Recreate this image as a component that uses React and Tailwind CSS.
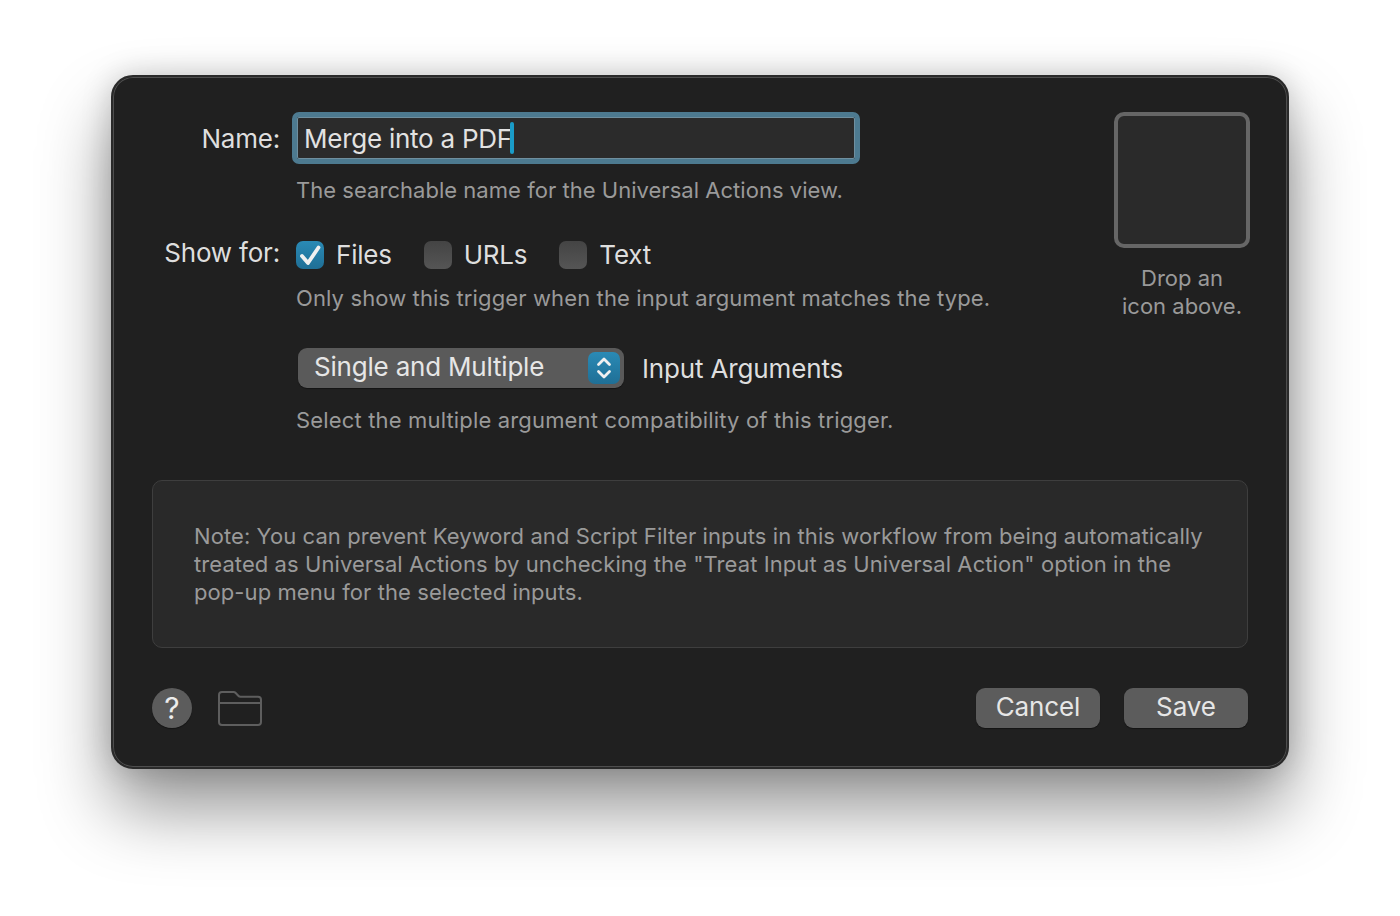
const sans = "font-['Inter','Liberation_Sans',sans-serif]";

function Checkbox({ checked, label }) {
  return (
    <label className="flex items-center gap-[12px]">
      {checked ? (
        <span className="flex h-[28px] w-[28px] items-center justify-center rounded-[7px] bg-gradient-to-b from-[#2a8ab5] to-[#1f6f96]">
          <svg width="28" height="28" viewBox="0 0 28 28" fill="none">
            <path d="M6 15l6 7L22.500 6.500" stroke="#f0f0f0" strokeWidth="3.800" strokeLinecap="round" strokeLinejoin="round" />
          </svg>
        </span>
      ) : (
        <span className="h-[28px] w-[28px] rounded-[7px] bg-gradient-to-b from-[#444444] to-[#555555]" />
      )}
      <span className="mt-[1px] text-[26px] leading-[32px] tracking-[-0.22px] text-[#dedede]">{label}</span>
    </label>
  );
}

function Hint({ children, className = "" }) {
  return <p className={`text-[22px] leading-[28px] text-[#9a9a9a] ${className}`}>{children}</p>;
}

function PushButton({ children }) {
  return (
    <button className="h-[40px] w-[124px] rounded-[9px] bg-[#5c5c5c] pb-[2px] text-[26px] leading-[36px] tracking-[-0.1px] text-[#e6e6e6] shadow-[0_1px_1px_rgba(0,0,0,0.4)]">
      {children}
    </button>
  );
}

export default function App() {
  return (
    <div className={`h-[916px] overflow-hidden bg-white pt-[75px] ${sans}`}>
      <div className="mx-[111px] h-[694px] rounded-[22px] border-2 border-[#2a2a2a] bg-[#202020] px-[39px] pt-[35px] shadow-[inset_0_0_0_1px_#4e4e4e,0_40px_70px_rgba(0,0,0,0.42),0_0_30px_rgba(0,0,0,0.18)]">
        <div className="flex h-[368px] justify-between">
          <div className="flex flex-col">
            <div className="flex">
              <div className="w-[128px] pt-[11px] text-right text-[26px] leading-[32px] tracking-[-0.2px] text-[#dedede]">Name:</div>
              <div className="ml-[12px] flex h-[52px] w-[568px] items-center rounded-[7px] border-[5px] border-[#4d7a90] bg-[#2b2b2b] pl-[7px] outline outline-1 -outline-offset-[6px] outline-[#6f8f9f]">
                <span className="pt-[2px] text-[26px] leading-[32px] tracking-[-0.25px] text-[#e2e2e2]">Merge into a PDF</span>
                <span className="ml-[-2px] h-[32px] w-[4px] rounded-sm bg-[#1a9cc8]" />
              </div>
            </div>
            <Hint className="ml-[144px] mt-[12px] tracking-[0.03px]">The searchable name for the Universal Actions view.</Hint>
            <div className="mt-[34px] flex">
              <div className="w-[128px] text-right text-[26px] leading-[30px] tracking-[-0.2px] text-[#dedede]">Show for:</div>
              <div className="ml-[16px] flex gap-[32px]">
                <Checkbox checked label="Files" />
                <Checkbox label="URLs" />
                <Checkbox label="Text" />
              </div>
            </div>
            <Hint className="ml-[144px] mt-[13px] tracking-[0.12px]">Only show this trigger when the input argument matches the type.</Hint>
            <div className="ml-[146px] mt-[36px] flex items-center gap-[18px]">
              <div className="flex h-[40px] w-[326px] items-center justify-between rounded-[9px] bg-[#5a5a5a] pl-[16px] pr-[4px] shadow-[0_1px_1px_rgba(0,0,0,0.4)]">
                <span className="mb-[2px] text-[26px] leading-[32px] tracking-[-0.2px] text-[#e6e6e6]">Single and Multiple</span>
                <span className="flex h-[32px] w-[32px] items-center justify-center rounded-[7px] bg-gradient-to-b from-[#2a8ab5] to-[#1f6f96]">
                  <svg width="20" height="26" viewBox="0 0 20 26" fill="none">
                    <path d="M4.500 9.500L10 4l5.500 5.500M4.500 16.500L10 22l5.500-5.500" stroke="#f0f0f0" strokeWidth="2.800" strokeLinecap="round" strokeLinejoin="round" />
                  </svg>
                </span>
              </div>
              <span className="mt-[2px] text-[26px] leading-[32px] tracking-[-0.15px] text-[#dedede]">Input Arguments</span>
            </div>
            <Hint className="ml-[144px] mt-[18px] tracking-[0.16px]">Select the multiple argument compatibility of this trigger.</Hint>
          </div>
          <div className="mr-[-2px] flex w-[136px] flex-col items-center">
            <div className="h-[136px] w-[136px] rounded-[10px] border-4 border-[#666666] bg-[#2a2a2a]" />
            <Hint className="mt-[16px] w-[140px] text-center">
              Drop an
              <br />
              icon above.
            </Hint>
          </div>
        </div>
        <div className="h-[168px] rounded-[10px] border border-[#3e3e3e] bg-[#292929] px-[41px] pt-[41px]">
          <Hint className="tracking-[0.08px]">
            Note: You can prevent Keyword and Script Filter inputs in this workflow from being automatically
            <br />
            treated as Universal Actions by unchecking the "Treat Input as Universal Action" option in the
            <br />
            pop-up menu for the selected inputs.
          </Hint>
        </div>
        <div className="mt-[40px] flex items-center">
          <span className="flex h-[40px] w-[40px] items-center justify-center rounded-full bg-[#5c5c5c] text-[30px] leading-none text-[#ececec] shadow-[0_1px_1px_rgba(0,0,0,0.4)]">?</span>
          <svg className="ml-[26px]" width="44" height="36" viewBox="0 0 44 36" fill="none" stroke="#5e5e5e" strokeWidth="2">
            <path d="M1 5a3 3 0 0 1 3-3h11.500a3 3 0 0 1 2.200 1l2.600 2.800a3 3 0 0 0 2.200 1H40a3 3 0 0 1 3 3V32a3 3 0 0 1-3 3H4a3 3 0 0 1-3-3z" />
            <path d="M2 13h40" />
          </svg>
          <div className="ml-auto flex gap-[24px]">
            <PushButton>Cancel</PushButton>
            <PushButton>Save</PushButton>
          </div>
        </div>
      </div>
    </div>
  );
}
